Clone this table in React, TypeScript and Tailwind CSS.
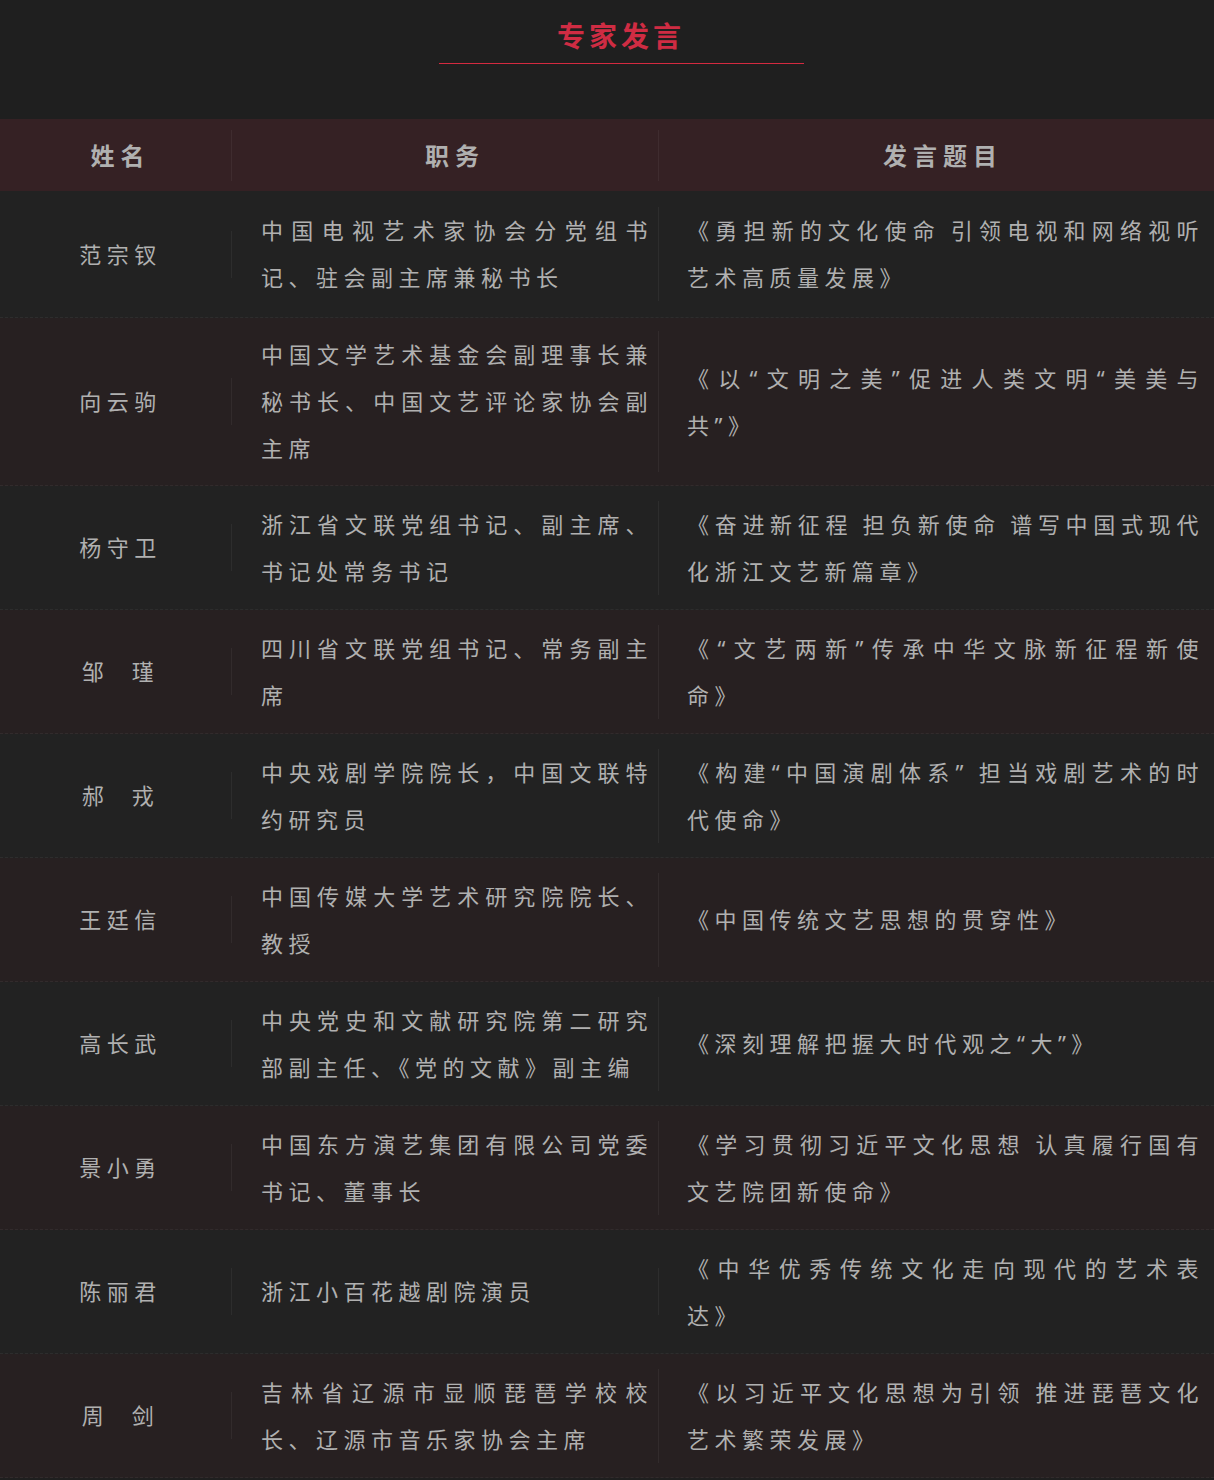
type Speaker = {
    name: string
    duty: string[]
    topic: string[]
}

const speakers: Speaker[] = [
    {
        name: '范宗钗',
        duty: ['中国电视艺术家协会分党组书', '记、驻会副主席兼秘书长'],
        topic: ['《勇担新的文化使命 引领电视和网络视听', '艺术高质量发展》'],
    },
    {
        name: '向云驹',
        duty: ['中国文学艺术基金会副理事长兼', '秘书长、中国文艺评论家协会副', '主席'],
        topic: ['《以“文明之美”促进人类文明“美美与', '共”》'],
    },
    {
        name: '杨守卫',
        duty: ['浙江省文联党组书记、副主席、', '书记处常务书记'],
        topic: ['《奋进新征程 担负新使命 谱写中国式现代', '化浙江文艺新篇章》'],
    },
    {
        name: '邹\u00a0\u00a0瑾',
        duty: ['四川省文联党组书记、常务副主', '席'],
        topic: ['《“文艺两新”传承中华文脉新征程新使', '命》'],
    },
    {
        name: '郝\u00a0\u00a0戎',
        duty: ['中央戏剧学院院长，中国文联特', '约研究员'],
        topic: ['《构建“中国演剧体系” 担当戏剧艺术的时', '代使命》'],
    },
    {
        name: '王廷信',
        duty: ['中国传媒大学艺术研究院院长、', '教授'],
        topic: ['《中国传统文艺思想的贯穿性》'],
    },
    {
        name: '高长武',
        duty: ['中央党史和文献研究院第二研究', '部副主任、《党的文献》副主编'],
        topic: ['《深刻理解把握大时代观之“大”》'],
    },
    {
        name: '景小勇',
        duty: ['中国东方演艺集团有限公司党委', '书记、董事长'],
        topic: ['《学习贯彻习近平文化思想 认真履行国有', '文艺院团新使命》'],
    },
    {
        name: '陈丽君',
        duty: ['浙江小百花越剧院演员'],
        topic: ['《中华优秀传统文化走向现代的艺术表', '达》'],
    },
    {
        name: '周\u00a0\u00a0剑',
        duty: ['吉林省辽源市显顺琵琶学校校', '长、辽源市音乐家协会主席'],
        topic: ['《以习近平文化思想为引领 推进琵琶文化', '艺术繁荣发展》'],
    },
]

// a line's word gap, kept narrow so the line does not overflow
function Gap() {
    return <span className="inline-block w-[9px]" />
}

// each wrapped line is its own block so breaks match; all but the last are stretched
function Lines({ lines }: { lines: string[] }) {
    return (
        <>
            {lines.map((line, i) => (
                <div
                    key={i}
                    className={i < lines.length - 1 ? 'whitespace-nowrap text-justify [text-align-last:justify]' : 'whitespace-nowrap'}
                >
                    {line.split(' ').map((part, j) => (
                        <span key={j}>
                            {j > 0 && <Gap />}
                            {part}
                        </span>
                    ))}
                </div>
            ))}
        </>
    )
}

export default function App() {
    return (
        <div
            className="min-h-screen bg-[#1f1f1f] pb-[2px]"
            style={{ fontFamily: '"Noto Sans", "Noto Sans CJK SC", sans-serif' }}
        >
            <div className="flex h-[119px] flex-col items-center pl-[28px] pt-[16px]">
                <h2 className="text-[28px] font-bold leading-[40px] tracking-[4px] text-[#cf2c43]">专家发言</h2>
                <div className="mt-[7px] w-[365px] border-t border-[#d42a40]" />
            </div>

            <div className="flex h-[72px] items-center bg-[#352124] text-[24px] font-bold leading-[51px] tracking-[6px] text-[#b0b0b0]">
                <div className="w-[232px] border-r border-white/[0.05] pl-[10px] text-center">姓名</div>
                <div className="w-[427px] border-r border-white/[0.05] pl-[20px] text-center">职务</div>
                <div className="flex-1 pl-[13px] text-center">发言题目</div>
            </div>

            {speakers.map((s, i) => (
                <div
                    key={s.name}
                    className={`flex items-center border-b border-dashed border-white/[0.05] py-[13px] text-[22px] leading-[47px] tracking-[5.5px] text-[#b0b0b0] ${
                        i === 0 ? 'min-h-[127px]' : 'min-h-[124px]'
                    } ${i % 2 === 0 ? 'bg-[#222222]' : 'bg-[#272021]'}`}
                >
                    <div className="w-[232px] shrink-0 border-r border-white/[0.05] pl-[10px] text-center">{s.name}</div>
                    <div className="w-[427px] shrink-0 border-r border-white/[0.05] pl-[29px] pr-[5px]">
                        <Lines lines={s.duty} />
                    </div>
                    <div className="min-w-0 flex-1 pl-[28px] pr-[10px]">
                        <Lines lines={s.topic} />
                    </div>
                </div>
            ))}
        </div>
    )
}
